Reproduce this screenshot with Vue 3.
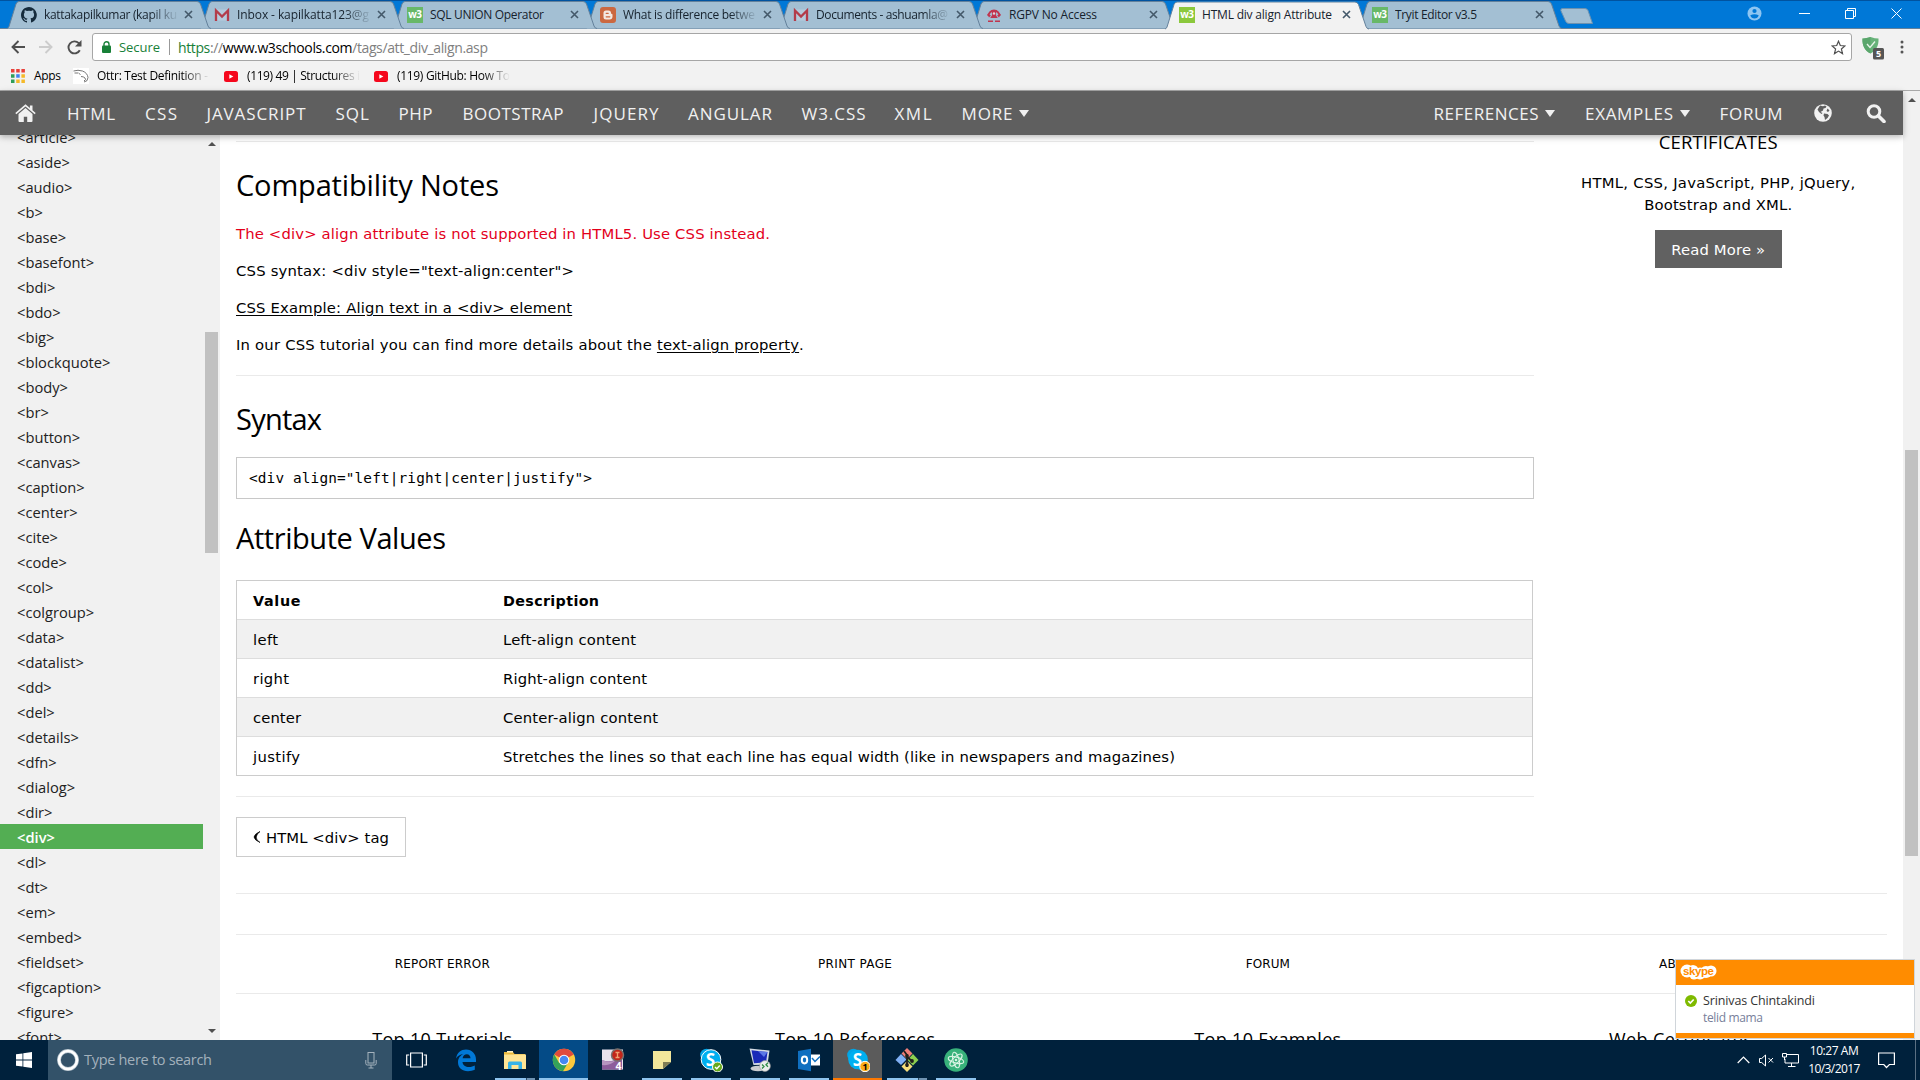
<script setup>
// Adjusts letter-spacing so a label fills the given width in pixels.
const vFit = {
  mounted(el, { value }) {
    const count = el.textContent.trim().length
    if (!value || count < 2) return
    const gap = (value - el.getBoundingClientRect().width) / (count - 1)
    el.style.letterSpacing = `${gap.toFixed(3)}px`
  }
}

const tabs = [
  { icon: 'github', title: 'kattakapilkumar (kapil ku', w: 133, fade: true },
  { icon: 'gmail', title: 'Inbox - kapilkatta123@g', w: 132, fade: true },
  { icon: 'w3', title: 'SQL UNION Operator', w: 114 },
  { icon: 'blogger', title: 'What is difference betwe', w: 132, fade: true },
  { icon: 'gmail', title: 'Documents - ashuamla@', w: 132, fade: true },
  { icon: 'rgpv', title: 'RGPV No Access', w: 88 },
  { icon: 'w3', title: 'HTML div align Attribute', w: 130, active: true },
  { icon: 'w3', title: 'Tryit Editor v3.5', w: 82 }
]

// slot: room taken in the bar, w: width of the label
const navLeft = [
  { t: 'HTML', slot: 78, w: 48 },
  { t: 'CSS', slot: 61.5, w: 32 },
  { t: 'JAVASCRIPT', slot: 129, w: 99 },
  { t: 'SQL', slot: 63, w: 33.5 },
  { t: 'PHP', slot: 64, w: 34 },
  { t: 'BOOTSTRAP', slot: 131, w: 101 },
  { t: 'JQUERY', slot: 94.5, w: 65 },
  { t: 'ANGULAR', slot: 113.5, w: 84 },
  { t: 'W3.CSS', slot: 93, w: 64 },
  { t: 'XML', slot: 67, w: 37 },
  { t: 'MORE', slot: 80, w: 51, caret: true }
]
const navRight = [
  { t: 'REFERENCES', slot: 151.5, w: 105, caret: true },
  { t: 'EXAMPLES', slot: 134.5, w: 88, caret: true },
  { t: 'FORUM', slot: 94.5, w: 63 }
]

const tags = ['article', 'aside', 'audio', 'b', 'base', 'basefont', 'bdi', 'bdo', 'big', 'blockquote', 'body', 'br', 'button', 'canvas', 'caption', 'center', 'cite', 'code', 'col', 'colgroup', 'data', 'datalist', 'dd', 'del', 'details', 'dfn', 'dialog', 'dir', 'div', 'dl', 'dt', 'em', 'embed', 'fieldset', 'figcaption', 'figure', 'font']

const rows = [
  ['left', 'Left-align content', 25, 133],
  ['right', 'Right-align content', 36, 144],
  ['center', 'Center-align content', 48, 155],
  ['justify', 'Stretches the lines so that each line has equal width (like in newspapers and magazines)', 47, 672]
]

const footLinks = [['REPORT ERROR', 95], ['PRINT PAGE', 74], ['FORUM', 44], ['ABOUT', 43]]
const footHeads = [['Top 10 Tutorials', 140], ['Top 10 References', 160], ['Top 10 Examples', 147], ['Web Certificates', 143]]

const apps = ['edge', 'explorer', 'chrome', 'studio', 'notes', 'skype', 'rdp', 'outlook', 'skype1', 'git', 'atom']
const running = ['explorer', 'chrome', 'notes', 'skype', 'rdp', 'outlook', 'skype1', 'git', 'atom']
</script>

<template>
  <div class="screen">
    <div class="titlebar">
      <div v-for="(t, i) in tabs" :key="i" class="tab" :class="{ active: t.active }" :style="{ zIndex: t.active ? 20 : 10 - i }">
        <svg class="shape" width="206" height="29" viewBox="0 0 206 29">
          <path d="M0 28.5 Q1.5 28 2 26.500 L9 4 Q10 1.500 12 1.500 H190 Q192.500 1.500 193.500 4 L201 26 Q202 28.500 204 28.500" />
        </svg>
        <svg class="fav" width="16" height="16" viewBox="0 0 16 16">
          <g v-if="t.icon === 'github'">
            <path fill="#152b3c" d="M8 0C3.600 0 0 3.600 0 8c0 3.500 2.300 6.500 5.500 7.600.4.100.5-.2.500-.4v-1.400c-2.200.5-2.700-1-2.700-1-.4-.9-.9-1.200-.9-1.200-.7-.5.1-.5.1-.5.800.1 1.200.8 1.200.8.700 1.200 1.900.9 2.300.7.100-.5.300-.9.500-1.100-1.800-.2-3.600-.9-3.600-4 0-.9.300-1.600.8-2.100-.1-.2-.4-1 .1-2.100 0 0 .7-.2 2.200.8a7.500 7.500 0 0 1 4 0c1.500-1 2.200-.8 2.200-.8.400 1.100.2 1.900.1 2.100.5.600.8 1.300.8 2.100 0 3.100-1.900 3.700-3.700 3.900.300.300.600.800.600 1.500v2.200c0 .2.100.5.600.4A8 8 0 0 0 8 0z" />
          </g>
          <g v-else-if="t.icon === 'gmail'">
            <path fill="#b5cbdc" d="M1 2.500h14v11H1z" />
            <path fill="none" stroke="#b33c4a" stroke-width="2.300" d="M2 14V3.500l6 6 6-6V14" />
          </g>
          <g v-else-if="t.icon === 'w3'">
            <rect width="16" height="16" :fill="t.active ? '#8bc83c' : '#68b868'" />
            <text x="7.800" y="11.300" text-anchor="middle" class="w3t">w3</text>
          </g>
          <g v-else-if="t.icon === 'blogger'">
            <rect width="16" height="16" rx="3" fill="#cb6840" />
            <path d="M6 3.500h2.500q2.500 0 2.500 2.500 0 1 1 1 .5 0 .5.700V9.500q0 3-3 3H6q-2.500 0-2.500-2.500V6q0-2.500 2.500-2.500z" fill="#f4e9e2" />
            <path stroke="#cb6840" stroke-width="1.300" stroke-linecap="round" d="M6.200 6.300h2M6.200 9.800h3.600" />
          </g>
          <g v-else>
            <path fill="none" stroke="#c0354f" stroke-width="2" d="M2.500 9A5.500 5.500 0 1 1 13.500 9" />
            <path fill="#c0354f" d="M5.500 3h5L9.800 8l2 3H4.200l2-3zM1 7l4 1.500-2 2zM15 7l-4 1.500 2 2zM2 13.500h5V15H2zM9 13.500h5V15H9z" />
            <circle cx="8" cy="6.500" r="1.200" fill="#e8d5dd" />
          </g>
        </svg>
        <span class="ttl" :class="{ fade: t.fade }"><span v-fit="t.w" class="ib">{{ t.title }}</span></span>
        <svg class="x" width="9" height="9" viewBox="0 0 9 9"><path d="M1 1l7 7M8 1L1 8" /></svg>
      </div>
      <svg class="newtab" width="34" height="17" viewBox="0 0 34 17"><path d="M2.500.5H25Q27 .5 28 2.500L32.500 15.500H9Q6.500 15.500 5.500 13L.8 2.500Q.5.5 2.500.5z" fill="#a3bfd3" stroke="#6d92b0" /></svg>
      <div class="winctl">
        <svg width="15" height="15" viewBox="0 0 15 15"><circle cx="7.500" cy="7.500" r="7" fill="#8ec5f2" /><circle cx="7.500" cy="5" r="2.100" fill="#0078d7" /><path d="M3.300 9.300q4.200-2 8.400 0-1 3.200-4.200 3.200T3.300 9.300z" fill="#0078d7" /></svg>
        <svg width="11" height="11" viewBox="0 0 11 11"><path d="M0 5.500h11" stroke="#fff" /></svg>
        <svg width="11" height="11" viewBox="0 0 11 11" fill="none" stroke="#fff"><path d="M.5 2.500h8v8h-8zM2.500 2.500v-2h8v8h-2" /></svg>
        <svg width="11" height="11" viewBox="0 0 11 11"><path d="M.5.5l10 10M10.500.5l-10 10" stroke="#fff" /></svg>
      </div>
    </div>

    <div class="toolbar">
      <div class="urlrow">
        <svg class="back" width="14" height="14" viewBox="0 0 14 14"><path d="M14 7H1.500M7.500 1l-6 6 6 6" fill="none" stroke="#4f4f4f" stroke-width="1.900" /></svg>
        <svg class="fwd" width="14" height="14" viewBox="0 0 14 14"><path d="M0 7h12.500M6.500 1l6 6-6 6" fill="none" stroke="#ccc" stroke-width="1.900" /></svg>
        <svg class="reload" width="15" height="15" viewBox="0 0 15 15"><path d="M12.800 10.200A6 6 0 1 1 11.800 3.200L13 4.500" fill="none" stroke="#4f4f4f" stroke-width="1.900" /><path d="M14.500 0v6.500H8z" fill="#4f4f4f" /></svg>
        <div class="omni">
          <svg class="lock" width="9" height="12" viewBox="0 0 9 12"><rect y="4.500" width="9" height="7.500" rx="1" fill="#188038" /><path d="M2 5V3.200a2.500 2.500 0 0 1 5 0V5" fill="none" stroke="#188038" stroke-width="1.400" /></svg>
          <span v-fit="41" class="secure">Secure</span>
          <i class="bar"></i>
          <span v-fit="310" class="url"><b>https</b>://<em>www.w3schools.com</em>/tags/att_div_align.asp</span>
          <svg class="star" width="15" height="15" viewBox="0 0 15 15"><path d="M7.500 1.200l1.800 4.300 4.600.4-3.500 3.100 1.100 4.600-4-2.500-4 2.500L4.600 9 1.100 5.900l4.600-.4z" fill="none" stroke="#505050" stroke-width="1.200" /></svg>
        </div>
        <svg class="shield" width="23" height="23" viewBox="0 0 23 23"><path d="M8.500 0Q13 1.500 16.500 1.500C17 9 13.500 14 8.500 16.500 3.500 14 0 9 .5 1.500 4 1.500 8.500 0 8.500 0z" fill="#67b279" /><path d="M8.500 0v16.500C3.500 14 0 9 .5 1.500 4 1.500 8.500 0 8.500 0z" fill="#5aa66c" /><path d="M5 7l3 3.500 5-6" fill="none" stroke="#e8f5ea" stroke-width="1.300" /><rect x="11" y="11" width="11" height="11.500" rx="1.500" fill="#555" /><text x="16.500" y="20.200" text-anchor="middle" font-size="9" fill="#fff" class="bold">5</text></svg>
        <svg class="dots" width="4" height="14" viewBox="0 0 4 14" fill="#555"><circle cx="2" cy="2" r="1.500" /><circle cx="2" cy="7" r="1.500" /><circle cx="2" cy="12" r="1.500" /></svg>
      </div>
      <div class="marks">
        <svg width="14" height="14" viewBox="0 0 14 14"><path fill="#e8413a" d="M0 0h3.500v3.500H0zM5.200 0h3.500v3.500H5.200zM10.400 0h3.500v3.500h-3.500z" /><path fill="#2f9e58" d="M0 5.200h3.500v3.500H0zM0 10.400h3.500v3.500H0z" /><path fill="#3f82f0" d="M5.200 5.200h3.500v3.500H5.200z" /><path fill="#f5b929" d="M10.400 5.200h3.500v3.500h-3.500zM5.200 10.400h3.500v3.500H5.200zM10.400 10.400h3.500v3.500h-3.500z" /></svg>
        <span class="m1"><span v-fit="27" class="ib">Apps</span></span>
        <svg class="otter" width="16" height="16" viewBox="0 0 16 16"><path fill="#fff" d="M0 0h16v16H0z" /><path fill="none" stroke="#666" stroke-width=".9" d="M.5 3Q5 1.500 9.500 3q5 2 5.500 6.500Q15 13.500 11 14M1.500 5h4M6 5.500l1.500 1M8 8.500q2.500 0 4 1.500t-1 3" /></svg>
        <span class="m2 fade"><span v-fit="111" class="ib">Ottr: Test Definition -</span></span>
        <template v-for="(m, i) in ['(119) 49 | Structures i', '(119) GitHub: How To']" :key="i">
          <svg class="yt" width="14" height="11" viewBox="0 0 14 11"><rect width="14" height="11" rx="2.500" fill="#f5071c" /><path d="M5.300 3.200v4.600l4-2.300z" fill="#fff" /></svg>
          <span class="m3 fade"><span v-fit="113" class="ib">{{ m }}</span></span>
        </template>
      </div>
    </div>

    <div class="page">
      <div class="view">
        <nav>
          <svg class="home" width="21" height="18" viewBox="0 0 21 18" fill="#f1f1f1"><path d="M10.500 4L3.500 10v7q0 1 1 1h4.300v-5.200h3.400V18h4.300q1 0 1-1v-7z" /><path d="M10.500.3L.3 9l1 1.200 9.200-7.800 9.200 7.800 1-1.200-3.200-2.800V1.500h-2.600v2.400z" /></svg>
          <span v-for="n in navLeft" :key="n.t" class="ni" :style="{ width: n.slot + 'px' }"><span v-fit="n.w" class="ib">{{ n.t }}</span><i v-if="n.caret" class="caret"></i></span>
          <span class="grow"></span>
          <span v-for="n in navRight" :key="n.t" class="ni" :style="{ width: n.slot + 'px' }"><span v-fit="n.w" class="ib">{{ n.t }}</span><i v-if="n.caret" class="caret"></i></span>
          <svg class="globe" width="18" height="18" viewBox="0 0 18 18"><circle cx="9" cy="9" r="8.800" fill="#f1f1f1" /><path d="M6 1.500l3 .8 2-.8 1.500 1-1 1.500-2 .5-.5 2-2.500 1.500L8.500 9l-1 1L5 8 3.500 5.500zM10 9.500l3.500.5 1.500 1.500-1.500 2.500-2.500 2-.5-3-1-1.500zM13.500 4.500l2 2-1.500 1.500-1.500-1z" fill="#5f5f5f" /></svg>
          <svg class="search" width="20" height="19" viewBox="0 0 20 19"><circle cx="8" cy="7.500" r="5.800" fill="none" stroke="#f1f1f1" stroke-width="3" /><path d="M12.500 12l5.500 5.500" stroke="#f1f1f1" stroke-width="3.600" stroke-linecap="round" /></svg>
        </nav>
        <div class="body">
          <div class="side">
            <div class="list">
              <div v-for="t in tags" :key="t" class="item" :class="{ on: t === 'div' }">&lt;{{ t }}&gt;</div>
            </div>
            <div class="sbar">
              <i class="up"></i><i class="thumb"></i><i class="down"></i>
            </div>
          </div>
          <div class="main">
            <div class="cols">
              <div class="content">
                <hr class="first">
                <h2><span v-fit="263">Compatibility Notes</span></h2>
                <p class="red"><span v-fit="534">The &lt;div&gt; align attribute is not supported in HTML5. Use CSS instead.</span></p>
                <p><span v-fit="338">CSS syntax: &lt;div style="text-align:center"&gt;</span></p>
                <p><u v-fit="336">CSS Example: Align text in a &lt;div&gt; element</u></p>
                <p><span v-fit="420.5" class="pre">In our CSS tutorial you can find more details about the </span><u v-fit="142">text-align property</u>.</p>
                <hr class="second">
                <h2><span v-fit="86">Syntax</span></h2>
                <div class="code"><span v-fit="343">&lt;div align="left|right|center|justify"&gt;</span></div>
                <h2 class="av"><span v-fit="210">Attribute Values</span></h2>
                <div class="table">
                  <div class="tr th"><div class="c1"><span v-fit="47.5">Value</span></div><div><span v-fit="96">Description</span></div></div>
                  <div v-for="r in rows" :key="r[0]" class="tr"><div class="c1"><span v-fit="r[2]">{{ r[0] }}</span></div><div><span v-fit="r[3]">{{ r[1] }}</span></div></div>
                </div>
                <hr class="third">
                <div class="btn">
                  <svg width="8" height="12" viewBox="0 0 8 12"><path d="M7 .5Q3.500 3 3.200 6T7 11.500Q1.500 9 1 6 1.500 3 7 .5z" fill="#000" stroke="#000" stroke-width=".7" /></svg>
                  <span v-fit="123">HTML &lt;div&gt; tag</span>
                </div>
              </div>
              <div class="aside">
                <div class="cert"><span v-fit="119">CERTIFICATES</span></div>
                <div class="at"><span v-fit="274">HTML, CSS, JavaScript, PHP, jQuery,</span></div>
                <div class="at"><span v-fit="148">Bootstrap and XML.</span></div>
                <div class="more"><span v-fit="94">Read More »</span></div>
              </div>
            </div>
            <div class="foot">
              <hr><hr class="f2">
              <div class="frow"><div v-for="f in footLinks" :key="f[0]"><span v-fit="f[1]">{{ f[0] }}</span></div></div>
              <hr class="f3">
              <div class="fheads"><div v-for="f in footHeads" :key="f[0]"><span v-fit="f[1]">{{ f[0] }}</span></div></div>
            </div>
          </div>
        </div>
      </div>
      <div class="pbar"><i class="up"></i><i class="thumb"></i></div>
    </div>

    <div class="toast">
      <div class="thead">
        <svg width="37" height="17" viewBox="0 0 37 17"><g fill="#fff"><circle cx="7" cy="7" r="6.500" /><circle cx="13" cy="6.500" r="5.500" /><circle cx="20" cy="9.500" r="6" /><circle cx="26" cy="8" r="6" /><circle cx="31" cy="7" r="5.500" /><circle cx="14" cy="11" r="4.500" /></g><text x="18.500" y="10.800" text-anchor="middle" textLength="31" class="sk">skype</text></svg>
      </div>
      <div class="tbody">
        <svg width="12" height="12" viewBox="0 0 12 12"><circle cx="6" cy="6" r="6" fill="#7fba00" /><path d="M3.300 6l2 2 3.400-3.500" fill="none" stroke="#fff" stroke-width="1.700" /></svg>
        <div><div class="who"><span v-fit="112">Srinivas Chintakindi</span></div><div class="msg"><span v-fit="60">telid mama</span></div></div>
      </div>
      <div class="tfoot"></div>
    </div>

    <div class="taskbar">
      <div class="start"><svg width="16" height="16" viewBox="0 0 16 16" fill="#fff"><path d="M0 2.300l6.500-.9v6.200H0zM7.300 1.300L16 0v7.600H7.300zM0 8.400h6.500v6.200L0 13.700zM7.300 8.400H16V16l-8.700-1.300z" /></svg></div>
      <div class="find">
        <svg width="22" height="22" viewBox="0 0 22 22"><circle cx="11" cy="11" r="9" fill="none" stroke="#b5c2cc" stroke-width="3.800" /><circle cx="11" cy="11" r="9" fill="none" stroke="#fff" stroke-width="2.600" /></svg>
        <span v-fit="128">Type here to search</span>
        <svg class="mic" width="12" height="17" viewBox="0 0 12 17" fill="none" stroke="#a5b3be"><rect x="3" y=".5" width="6" height="10.500" /><path d="M.8 8v3.500q0 1.500 1.500 1.500h7.400q1.500 0 1.500-1.500V8M6 13v3M3.500 16h5" /></svg>
      </div>
      <div class="app tv"><svg width="21" height="16" viewBox="0 0 21 16" fill="none" stroke="#fff" stroke-width="1.200"><path d="M4.600 1h11.800v14H4.600zM3.200 3H.7v10h2.500M17.800 3h2.500v10h-2.500" /></svg></div>
      <div v-for="a in apps" :key="a" class="app" :class="[a, { run: running.includes(a) }]">
        <svg width="24" height="24" viewBox="0 0 24 24">
          <g v-if="a === 'edge'"><path fill="#0078d7" d="M2 10.500C3 4.500 7 1.500 12 1.500c6 0 10 4.500 10 10V14H8.500c.3 3.500 3 5 6.500 5 2.300 0 4.300-.6 5.800-1.500v4.300C19 22.700 16.500 23.200 14 23.200c-6 0-10-3.500-10-9 0-4 2.300-6.800 5.500-8.200C6 6.200 3.500 8 2 10.500zM8.600 10.200h7.900c0-2.300-1.300-4-3.700-4-2.200 0-3.700 1.500-4.200 4z" /></g>
          <g v-else-if="a === 'explorer'"><path fill="#e9b93c" d="M1 4h9l1.500 2H22v4H1z" /><path fill="#ffe594" d="M1 6.500h22V21H1z" /><path fill="#fff3c4" d="M4 3h6v1.500H4z" /><path fill="#35b3e8" d="M5 21v-6q0-1.500 1.500-1.500h11Q19 13.500 19 15v6h-3.500v-4h-7v4z" /></g>
          <g v-else-if="a === 'chrome'"><circle cx="12" cy="12" r="11.200" fill="#fbc83d" /><path fill="#df4a3c" d="M12 12L2.300 6.400A11.200 11.200 0 0 1 21.700 6.400z" /><path fill="#34a25a" d="M2.300 6.400A11.200 11.200 0 0 0 11 23.200l5-8.500-4 2.500-5-2.500z" /><circle cx="12" cy="12" r="5.300" fill="#fff" /><circle cx="12" cy="12" r="4.300" fill="#4688f1" /></g>
          <g v-else-if="a === 'studio'"><path fill="#e9e3ee" d="M1 1.500h21v20H1z" /><path fill="#8d5d9c" d="M1 12q9 4 20-4v13.500H1z" /><path fill="#b795c0" d="M1 12q8 3 14 0-5 6-14 5z" /><circle cx="16.500" cy="7" r="6" fill="#c3261a" stroke="#77716f" stroke-width="1.500" /><path d="M14.500 4.500h4M16.500 4.500v5M14.500 9.500h4" stroke="#f0a070" stroke-width="1.300" /><text x="17.500" y="21.500" text-anchor="middle" font-size="10.500" fill="#fff" class="bold">4</text></g>
          <g v-else-if="a === 'notes'"><path fill="#f2e79b" d="M3 3h18v11l-8 7H3z" /><path fill="#7f7d55" d="M13 14h8l-8 7z" /></g>
          <g v-else-if="a === 'skype' || a === 'skype1'"><circle cx="7.500" cy="7" r="6.300" fill="#00a5e6" /><circle cx="16" cy="16" r="6.300" fill="#00a5e6" /><circle cx="12" cy="11.500" r="9.800" fill="#00aff0" :stroke="a === 'skype' ? '#fff' : 'none'" /><text x="11.500" y="17.500" text-anchor="middle" font-size="17" fill="#fff" class="bold">S</text><g v-if="a === 'skype'"><circle cx="18.500" cy="19" r="5" fill="#67a91c" stroke="#fff" /><path d="M16 19l1.800 1.800 3-3.300" fill="none" stroke="#fff" stroke-width="1.400" /></g><g v-else><circle cx="19" cy="18.500" r="5.200" fill="#fcab17" stroke="#fff" /><text x="19" y="21.800" text-anchor="middle" font-size="9" fill="#000" class="bold">1</text></g></g>
          <g v-else-if="a === 'rdp'"><path fill="#d3dae4" d="M1.500.5l20 2-2 14-14 .5z" /><path fill="#1a2bb8" d="M3.500 2.300L19.500 4 18 14.500 6 15.200z" /><path fill="#5c78e6" d="M10 3l9.500 1L16 9z" /><ellipse cx="10" cy="20.500" rx="7.500" ry="2.800" fill="#c9ccd0" /><circle cx="17" cy="18" r="5.400" fill="#eceeec" stroke="#999" stroke-width=".6" /><path d="M14 16.500l2 2-2 2M20 14.800l-2 2 2 2" fill="none" stroke="#2e8b43" stroke-width="1.300" /></g>
          <g v-else-if="a === 'outlook'"><path fill="#fff" d="M11 6.500h12v11H11z" /><path fill="none" stroke="#1271c0" stroke-width="1.500" d="M15 10l3 3.500 5-5" /><path fill="#0f6fc0" d="M1 3l13-2.300v22.600L1 21z" /><ellipse cx="7.500" cy="12" rx="2.700" ry="3.400" fill="none" stroke="#fff" stroke-width="2" /></g>
          <g v-else-if="a === 'git'"><path fill="#ee7e78" d="M12 0l5.500 5.500L12 11 6.500 5.500z" /><path fill="#7fb0f5" d="M6 6l5.500 5.500L6 17 .5 12z" /><path fill="#8ccf4f" d="M18 6l5.500 6L18 17.500 12.500 12z" /><path fill="#f6de7a" d="M12 13l5.500 5.500L12 24l-5.500-5.500z" /><path d="M9 3l3 4v12M12 9l5 4" stroke="#20201c" stroke-width="1.800" fill="none" /><circle cx="12" cy="8" r="1.900" fill="#20201c" /><circle cx="17" cy="13" r="1.900" fill="#20201c" /><circle cx="12" cy="17" r="1.900" fill="#20201c" /></g>
          <g v-else><circle cx="12" cy="12" r="11.800" fill="#38b27b" /><g fill="none" stroke="#d8f3e3" stroke-width="1.100"><ellipse cx="12" cy="12" rx="3" ry="8" transform="rotate(-15 12 12)" /><ellipse cx="12" cy="12" rx="3" ry="8" transform="rotate(45 12 12)" /><ellipse cx="12" cy="12" rx="3" ry="8" transform="rotate(105 12 12)" /></g><circle cx="12" cy="12" r="1.300" fill="#d8f3e3" /></g>
        </svg>
        <i v-if="running.includes(a)" class="line" :class="{ split: a === 'explorer' || a === 'git' }"></i>
      </div>
      <span class="grow"></span>
      <div class="tray">
        <svg width="13" height="8" viewBox="0 0 13 8"><path d="M.7 7l5.800-5.800L12.300 7" fill="none" stroke="#fff" stroke-width="1.200" /></svg>
        <svg class="spk" width="15" height="13" viewBox="0 0 15 13" fill="none" stroke="#fff"><path d="M.5 4.500h2.200L6.500 1v11L2.700 8.500H.5zM9.500 4l4.500 4.500M14 4L9.500 8.500" /></svg>
        <svg class="net" width="17" height="14" viewBox="0 0 17 14" fill="none" stroke="#fff"><path d="M5 1.500h11.500v8.500H3V6M9.500 10v3M6 13.500h7.500M.5.5h4v3.500h-4zM2.500 4v3" /></svg>
        <div class="clock"><div><span v-fit="49">10:27 AM</span></div><div><span v-fit="52">10/3/2017</span></div></div>
        <svg class="ac" width="17" height="17" viewBox="0 0 17 17"><path d="M.6 1h15.800v11.500h-5L8.500 15.500 5.800 12.500H.6z" fill="none" stroke="#fff" stroke-width="1.200" /></svg>
        <i class="desk"></i>
      </div>
    </div>
  </div>
</template>

<style>
body { margin: 0; overflow: hidden; }
</style>

<style scoped>
.screen { position: relative; width: 1920px; height: 1080px; display: flex; flex-direction: column; overflow: hidden; background: #fff; color: #000; font-family: "Open Sans", "Noto Sans", sans-serif; white-space: nowrap; }
.screen svg { display: block; flex: none; }
span, u { display: inline-block; white-space: pre; }
i { font-style: normal; }
.grow { flex: 1; }
.bold { font-weight: 700; font-family: "Open Sans", sans-serif; }
.fade { -webkit-mask-image: linear-gradient(90deg, #000 calc(100% - 28px), transparent); mask-image: linear-gradient(90deg, #000 calc(100% - 28px), transparent); }

.titlebar { height: 29px; box-sizing: border-box; flex: none; background: #0078d7; border-top: 1px solid #0053a0; border-bottom: 1px solid #64819b; display: flex; padding-left: 7px; }
.tab { position: relative; flex: none; width: 193px; height: 27px; display: flex; align-items: center; font-size: 12px; color: #16222d; }
.shape { position: absolute; left: 0; top: -1px; fill: #a3bfd3; stroke: #64819b; stroke-width: 1; }
.active .shape { fill: #f2f2f2; height: 30px; }
.fav { position: relative; margin-left: 14px; }
.w3t { font: 700 10px "Open Sans", sans-serif; fill: #fff; letter-spacing: -.5px; }
.ttl { position: relative; width: 135px; margin-left: 7px; height: 18px; line-height: 18px; overflow: hidden; }
.x { position: relative; margin-left: 5px; fill: none; stroke: #44596a; stroke-width: 1.600; }
.newtab { margin: 7px 0 0 9px; }
.winctl { margin-left: auto; width: 173px; display: flex; align-items: center; padding-bottom: 2px; }
.winctl svg:nth-child(2) { margin-left: 37px; }
.winctl svg:nth-child(3), .winctl svg:nth-child(4) { margin-left: 35px; }

.toolbar { height: 62px; box-sizing: border-box; flex: none; background: #f2f2f2; border-bottom: 1px solid #a9a9a9; }
.urlrow { height: 36px; display: flex; align-items: center; }
.back { margin-left: 11px; }
.fwd { margin-left: 14px; }
.reload { margin-left: 14px; }
.omni { flex: none; margin-left: 10px; width: 1760px; height: 28px; box-sizing: border-box; border: 1px solid #a6a6a6; border-radius: 3px; background: #fff; display: flex; align-items: center; font-size: 14px; }
.lock { margin-left: 9px; }
.secure { margin-left: 8px; width: auto; color: #188038; font-size: 13px; }
.bar { width: 1px; height: 16px; background: #999; margin: 0 8px 0 9px; }
.url { color: #808080; }
.url b { font-weight: 400; color: #188038; }
.url em { font-style: normal; color: #000; }
.star { margin-left: auto; margin-right: 5px; }
.shield { margin: 2px 0 0 10px; }
.dots { margin-left: 15px; }
.marks { height: 22px; display: flex; align-items: center; padding-left: 11px; font-size: 12px; line-height: 20px; }
.m1 { margin-left: 9px; width: 27px; }
.otter { margin-left: 12px; }
.m2 { margin-left: 8px; width: 113px; }
.yt { margin-left: 14px; }
.m3 { margin-left: 9px; width: 113px; }

.page { height: 949px; flex: none; display: flex; }
.view { width: 1903px; display: flex; flex-direction: column; }
nav { position: relative; z-index: 2; flex: none; height: 44px; background: #5f5f5f; color: #f1f1f1; display: flex; align-items: center; font-size: 17px; box-shadow: 0 2px 5px rgba(0,0,0,.16), 0 2px 8px rgba(0,0,0,.14); }
.home { margin: 0 31px 0 15px; }
.ni { flex: none; display: flex; align-items: center; line-height: 44px; }
.ni .ib { padding-top: 1px; }
.caret { display: block; width: 0; height: 0; margin-left: 6px; border: 5.500px solid transparent; border-top: 7px solid #f1f1f1; border-bottom: 0; }
.globe { margin: 0 34px 1px 0; }
.search { margin-right: 17px; }
.body { height: 905px; display: flex; overflow: hidden; }
.side { width: 220px; flex: none; background: #f1f1f1; display: flex; }
.list { width: 203px; margin-top: -11px; height: 916px; }
.item { height: 25px; line-height: 26px; padding-left: 17px; font-size: 14.700px; color: #222; }
.on { background: #53ae53; color: #fff; font-weight: 600; }
.sbar { width: 17px; display: flex; flex-direction: column; align-items: center; margin-top: 7px; height: 898px; }
.up { width: 0; height: 0; border: 4px solid transparent; border-bottom: 4px solid #505050; border-top: 0; }
.down { width: 0; height: 0; margin-top: 476px; border: 4px solid transparent; border-top: 4px solid #505050; border-bottom: 0; }
.thumb { width: 13px; height: 221px; background: #c1c1c1; margin-top: 186px; }
.main { flex: 1; padding-left: 16px; font-family: "DejaVu Sans", Verdana, sans-serif; font-size: 14.800px; }
.cols { display: flex; }
.content { width: 1297.500px; flex: none; }
hr { display: block; margin: 0; border: 0; height: 1px; background: #eaeaea; }
hr.first { margin-top: 6px; }
h2 { margin: 23px 0 0; height: 40px; line-height: 40px; font: 400 29px/40px "Open Sans", "Noto Sans", sans-serif; }
p { margin: 0; height: 37px; line-height: 37px; }
.red { margin-top: 10px; color: #e3001b; }
u { text-decoration: underline; text-underline-offset: 2px; }
hr.second { margin-top: 12px; }
.code { margin-top: 18px; height: 42px; box-sizing: border-box; border: 1px solid #c8c8c8; padding-left: 12px; line-height: 41px; font-family: "DejaVu Sans Mono", "Liberation Mono", monospace; font-size: 14.400px; }
h2.av { margin-top: 19px; }
.table { margin-top: 22px; border: 1px solid #ccc; border-bottom: 0; width: 1295px; }
.tr { display: flex; height: 38px; line-height: 39px; border-bottom: 1px solid #ddd; padding-left: 16px; }
.tr:nth-child(even) { background: #f1f1f1; }
.tr:last-child { border-color: #ccc; }
.th { font-weight: 700; font-size: 14.300px; line-height: 40px; }
.c1 { width: 250px; }
hr.third { margin-top: 20px; }
.btn { margin-top: 20px; width: 170px; height: 40px; box-sizing: border-box; border: 1px solid #ccc; display: flex; align-items: center; padding-left: 16px; gap: 5px; }
.aside { flex: 1; text-align: center; display: flex; flex-direction: column; align-items: center; }
.cert { font: 400 18.500px/26px "Open Sans", sans-serif; margin-top: -6px; height: 26px; }
.at { height: 22px; line-height: 22px; }
.cert + .at { margin-top: 17px; }
.more { margin-top: 14px; width: 127px; height: 38px; line-height: 39px; background: #616161; color: #fff; font-size: 14.800px; }
.foot { margin-top: 36px; width: 1651px; }
hr.f2 { margin-top: 40px; }
.frow, .fheads { display: flex; }
.frow > div, .fheads > div { flex: 1; text-align: center; }
.frow { height: 58px; line-height: 58px; font-size: 12px; }
.fheads { margin-top: 31px; font: 400 18px/28px "Open Sans", sans-serif; }
.pbar { width: 17px; background: #f1f1f1; display: flex; flex-direction: column; align-items: center; }
.pbar .up { margin-top: 7px; }
.pbar .thumb { margin-top: 348px; height: 406px; }

.toast { position: absolute; z-index: 5; left: 1675px; top: 959px; width: 240px; height: 80px; box-sizing: border-box; border: 1px solid #d0d5da; background: #fff; }
.thead { height: 25px; background: #ff8c00; padding: 4px 0 0 4px; box-sizing: border-box; }
.sk { font: 700 11.500px "Liberation Sans", sans-serif; fill: #ff8c00; }
.tbody { height: 48px; display: flex; padding: 0 0 0 9px; }
.tbody svg { margin-top: 10px; }
.tbody > div { margin-left: 6px; }
.who { font-size: 12.500px; height: 16px; line-height: 16px; margin-top: 8px; color: #333; }
.msg { font-size: 12px; height: 17px; line-height: 17px; color: #77809a; }
.tfoot { height: 5px; background: #ff8c00; }

.taskbar { height: 40px; flex: none; background: #00213c; display: flex; }
.start { width: 48px; display: flex; align-items: center; justify-content: center; }
.find { width: 344px; background: #335269; display: flex; align-items: center; font-size: 14.500px; color: #a3b1bc; padding: 0 15px 0 9px; box-sizing: border-box; }
.find span { margin-left: 5px; line-height: 40px; }
.mic { margin-left: auto; }
.app { position: relative; width: 49px; display: flex; align-items: center; justify-content: center; }
.tv { width: 49px; }
.chrome { background: #044b87; }
.skype1 { background: #5b5b5b; }
.line { position: absolute; left: 5px; right: 4px; bottom: 0; height: 2px; background: #8fc4ee; }
.split { background: linear-gradient(90deg, #8fc4ee 31px, #2c4a62 31px, #2c4a62 32px, #6f93b2 32px); }
.chrome .line { left: 0; right: 0; }
.skype1 .line { left: 0; right: 0; background: #ff7800; }
.tray { display: flex; align-items: center; color: #fff; width: 183px; }
.spk { margin-left: 9px; }
.net { margin-left: 8px; }
.clock { width: 66px; margin-left: 2px; text-align: center; font-size: 12px; line-height: 18px; }
.ac { margin-left: 11px; }
.desk { width: 1px; height: 40px; margin-left: 20px; background: #5b7083; }
</style>
